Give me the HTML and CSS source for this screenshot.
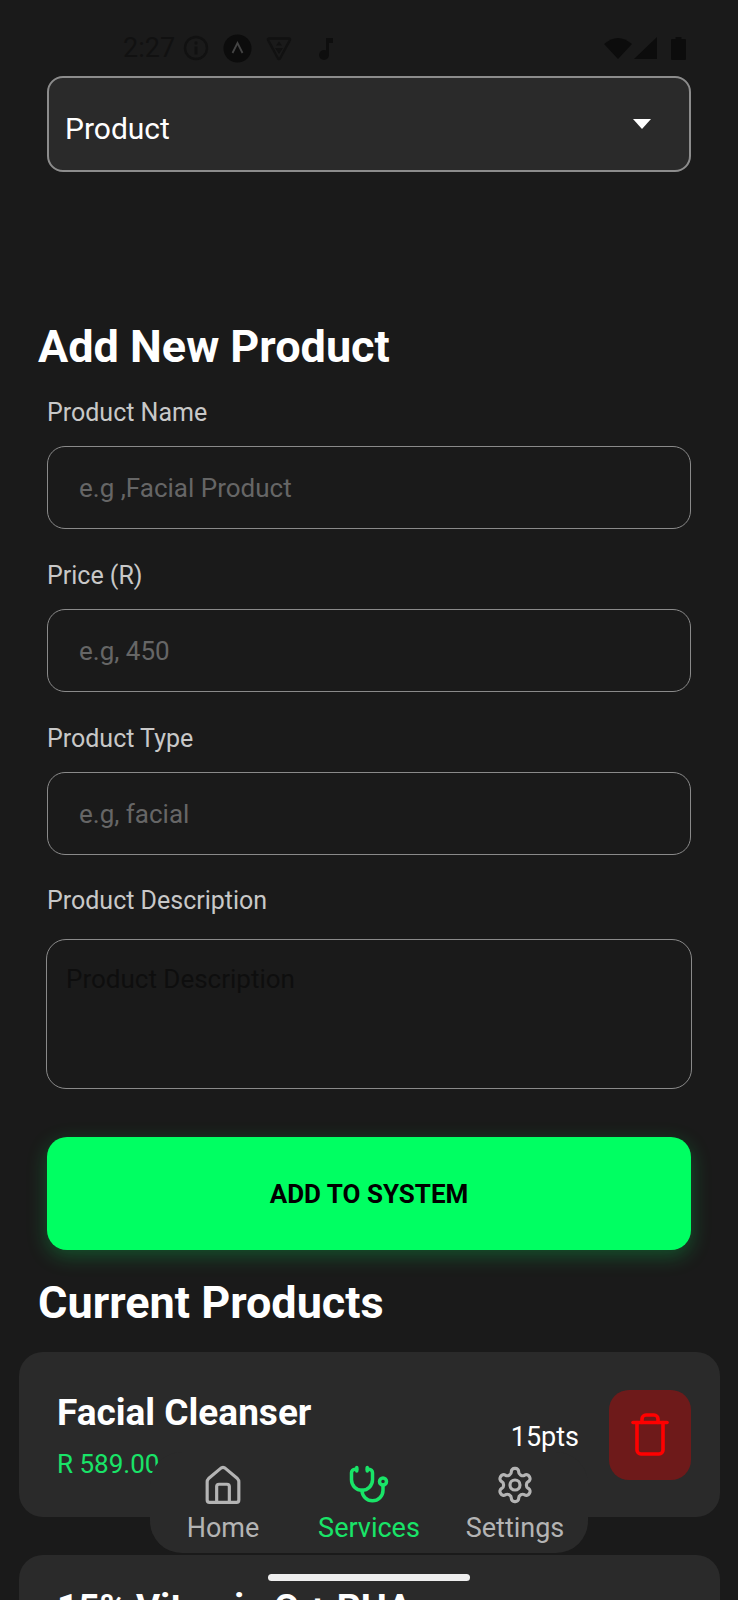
FILE: index.html
```html
<!DOCTYPE html>
<html lang="en">
<head>
    <meta charset="UTF-8">
    <meta name="viewport" content="width=device-width, initial-scale=1.0">
    <title>Add New Product</title>
    <link rel="stylesheet" href="styles.css">
</head>
<body>
    <div class="status-bar">
        <div class="status-left">
            <span class="status-time">2:27</span>
            <svg class="status-icon" width="26" height="26" viewBox="0 0 26 26"><circle cx="13" cy="13" r="11" fill="none" stroke="#111" stroke-width="2.4"/><circle cx="13" cy="8" r="1.7" fill="#111"/><rect x="11.6" y="11.5" width="2.8" height="8" fill="#111"/></svg>
            <svg class="status-icon icon-aura" width="29" height="29" viewBox="0 0 29 29"><circle cx="14.5" cy="14.5" r="14" fill="#0c0c0c"/><path d="M9.5 19 L14.5 9 L19.5 19" fill="none" stroke="#444" stroke-width="1.8"/></svg>
            <svg class="status-icon icon-shield" width="26" height="26" viewBox="0 0 26 26"><path d="M3 3.5 H23 a1 1 0 0 1 1 1.4 L14 23.5 a1.2 1.2 0 0 1 -2 0 L2 4.9 a1 1 0 0 1 1 -1.4z" fill="none" stroke="#111" stroke-width="2.4"/><path d="M9 13 H17 L13 19z" fill="#111"/><path d="M10 10.5 L13 6.5 L16 10.5z" fill="#111"/></svg>
            <svg class="status-icon icon-note" width="16" height="25" viewBox="0 0 16 25"><circle cx="6" cy="19" r="5" fill="#0e0e0e"/><path d="M8 19 V2 H15 V7 H11 V19z" fill="#0e0e0e"/></svg>
        </div>
        <div class="status-right">
            <svg width="28" height="22" viewBox="0 0 28 22"><path d="M0 7 Q14 -5 28 7 L14 22z" fill="#0c0c0c"/></svg>
            <svg width="23" height="22" viewBox="0 0 23 22"><path d="M23 0 V22 H0z" fill="#0c0c0c"/></svg>
            <svg class="icon-battery" width="15" height="23" viewBox="0 0 15 23"><path d="M4.5 0 H10.5 V2 H14 a1 1 0 0 1 1 1 V22 a1 1 0 0 1 -1 1 H1 a1 1 0 0 1 -1 -1 V3 a1 1 0 0 1 1 -1 H4.5z" fill="#0c0c0c"/></svg>
        </div>
    </div>

    <div class="page">
        <div class="picker">
            <span class="picker-value">Product</span>
            <span class="picker-arrow"></span>
        </div>

        <h1 class="add-title">Add New Product</h1>
        <div class="form">
            <div class="field">
                <div class="field-label">Product Name</div>
                <div class="field-input">e.g ,Facial Product</div>
            </div>
            <div class="field">
                <div class="field-label">Price (R)</div>
                <div class="field-input">e.g, 450</div>
            </div>
            <div class="field">
                <div class="field-label">Product Type</div>
                <div class="field-input">e.g, facial</div>
            </div>
            <div class="field-label label-description">Product Description</div>
            <div class="field-textarea">Product Description</div>
            <div class="add-button">ADD TO SYSTEM</div>
        </div>

        <h1 class="current-title">Current Products</h1>
        <div class="product-card">
            <div class="product-info">
                <div class="product-name">Facial Cleanser</div>
                <div class="product-price">R 589.00</div>
            </div>
            <div class="product-points">15pts</div>
            <div class="delete-button">
                <svg width="38" height="43" viewBox="0 0 38 43" fill="none" stroke="#f00" stroke-width="3.6" stroke-linecap="round" stroke-linejoin="round"><path d="M2 9.5 H36"/><path d="M11 9.5 V6 a4 4 0 0 1 4 -4 H23 a4 4 0 0 1 4 4 V9.5"/><path d="M6 9.5 V37 a4 4 0 0 0 4 4 H28 a4 4 0 0 0 4 -4 V9.5"/></svg>
            </div>
        </div>
        <div class="product-card card-next">
            <div class="product-info">
                <div class="product-name">15% Vitamin C + PHA</div>
            </div>
        </div>
    </div>

    <div class="bottom-nav">
        <div class="nav-item">
            <svg width="38" height="38" viewBox="0 0 24 24" fill="none" stroke="currentColor" stroke-width="2" stroke-linecap="round" stroke-linejoin="round"><path d="M3.5 23h17a1.5 1.5 0 0 0 1.5-1.5V10a3 3 0 0 0-.9-2.1L13.5 1.5a2 2 0 0 0-3 0L2.9 7.9A3 3 0 0 0 2 10v11.5A1.5 1.5 0 0 0 3.5 23z"/><path d="M8 23V13a1.5 1.5 0 0 1 1.5-1.5h5A1.5 1.5 0 0 1 16 13v10"/></svg>
            <span>Home</span>
        </div>
        <div class="nav-item nav-active">
            <svg width="42" height="38" viewBox="0 0 24 22" fill="none" stroke="currentColor" stroke-width="2" stroke-linecap="round" stroke-linejoin="round"><path d="M11 1v2"/><path d="M5 1v2"/><path d="M5 2H4a2 2 0 0 0-2 2v4a6 6 0 0 0 12 0V4a2 2 0 0 0-2-2h-1"/><path d="M8 14a6 6 0 0 0 12 0v-3"/><circle cx="20" cy="9" r="2"/></svg>
            <span>Services</span>
        </div>
        <div class="nav-item">
            <svg width="42" height="42" viewBox="0 0 24 24" fill="none" stroke="currentColor" stroke-width="1.9" stroke-linecap="round" stroke-linejoin="round"><path d="M12.22 2h-.44a2 2 0 0 0-2 2v.18a2 2 0 0 1-1 1.73l-.43.25a2 2 0 0 1-2 0l-.15-.08a2 2 0 0 0-2.73.73l-.22.38a2 2 0 0 0 .73 2.73l.15.1a2 2 0 0 1 1 1.72v.51a2 2 0 0 1-1 1.74l-.15.09a2 2 0 0 0-.73 2.73l.22.38a2 2 0 0 0 2.73.73l.15-.08a2 2 0 0 1 2 0l.43.25a2 2 0 0 1 1 1.73V20a2 2 0 0 0 2 2h.44a2 2 0 0 0 2-2v-.18a2 2 0 0 1 1-1.73l.43-.25a2 2 0 0 1 2 0l.15.08a2 2 0 0 0 2.73-.73l.22-.39a2 2 0 0 0-.73-2.73l-.15-.08a2 2 0 0 1-1-1.74v-.5a2 2 0 0 1 1-1.74l.15-.09a2 2 0 0 0 .73-2.73l-.22-.38a2 2 0 0 0-2.73-.73l-.15.08a2 2 0 0 1-2 0l-.43-.25a2 2 0 0 1-1-1.73V4a2 2 0 0 0-2-2z"/><circle cx="12" cy="12" r="3"/></svg>
            <span>Settings</span>
        </div>
    </div>
    <div class="home-indicator"></div>
</body>
</html>
```

FILE: styles.css
```css
html, body {
    margin: 0;
    height: 1600px;
    overflow: hidden;
}
body {
    position: relative;
    font-family: Roboto, sans-serif;
    background-color: #1a1a1a;
    color: #fff;
}

/* phone status bar, drawn dark on dark in the app */
.status-bar {
    position: absolute;
    top: 34px;
    left: 123px;
    right: 52px;
    height: 28px;
    display: flex;
    justify-content: space-between;
    align-items: center;
}
.status-left, .status-right {
    display: flex;
    align-items: center;
}
.status-time {
    font-size: 27px;
    color: #111;
    width: 60px;
}
.icon-aura { margin-left: 14px; }
.icon-shield { margin-left: 14px; }
.icon-note { margin-left: 26px; }
.status-right svg { margin-left: 2px; }
.status-right .icon-battery { margin-left: 14px; }

.page {
    padding-top: 76px;
}
.picker {
    height: 96px;
    margin: 0 47px;
    padding: 0 38px 0 16px;
    box-sizing: border-box;
    display: flex;
    justify-content: space-between;
    align-items: center;
    background: #2a2a2a;
    border: 2px solid #8c8c8c;
    border-radius: 16px;
}
.picker-value {
    font-size: 30px;
    padding-top: 8px;
}
.picker-arrow {
    width: 0;
    height: 0;
    border-left: 9px solid transparent;
    border-right: 9px solid transparent;
    border-top: 10px solid #fff;
}

h1 {
    margin: 0;
    font-size: 45px;
    font-weight: 700;
    line-height: 52px;
}
.add-title {
    margin: 149px 0 25px 38px;
}
.form {
    margin: 0 47px;
}
.field {
    margin-bottom: 32px;
}
.field-label {
    font-size: 25px;
    line-height: 30px;
    color: #c8c8c8;
    margin-bottom: 18px;
}
.field-input {
    height: 83px;
    box-sizing: border-box;
    padding-left: 31px;
    display: flex;
    align-items: center;
    font-size: 26px;
    color: #666;
    border: 1px solid #8a8a8a;
    border-radius: 18px;
}
.label-description {
    margin-top: -1px;
    margin-bottom: 23px;
}
.field-textarea {
    height: 150px;
    margin: 0 -1px;
    box-sizing: border-box;
    padding: 24px 19px;
    font-size: 26px;
    line-height: 30px;
    color: #0e0e0e;
    border: 1px solid #8a8a8a;
    border-radius: 20px;
}
.add-button {
    height: 113px;
    margin-top: 48px;
    display: flex;
    justify-content: center;
    align-items: center;
    font-size: 26px;
    font-weight: 700;
    color: #000;
    background: #00ff62;
    border-radius: 20px;
    box-shadow: 0 6px 20px rgba(0, 255, 98, 0.25);
}
.current-title {
    margin: 27px 0 23px 38px;
}

.product-card {
    height: 165px;
    margin: 0 18px 38px 19px;
    padding: 0 29px 0 38px;
    box-sizing: border-box;
    display: flex;
    align-items: center;
    background: #2a2a2a;
    border-radius: 24px;
}
.product-info {
    flex: 1;
}
.product-name {
    font-size: 37px;
    font-weight: 700;
    line-height: 44px;
    margin-bottom: 14px;
}
.product-price {
    font-size: 26px;
    line-height: 30px;
    color: #19e468;
}
.product-points {
    font-size: 27px;
    margin: 5px 30px 0 0;
}
.delete-button {
    width: 82px;
    height: 90px;
    display: flex;
    justify-content: center;
    align-items: center;
    background: #6e1a1a;
    border-radius: 20px;
}
.card-next {
    align-items: flex-start;
    padding-top: 31px;
}

.bottom-nav {
    position: absolute;
    left: 150px;
    top: 1452px;
    width: 438px;
    height: 101px;
    display: grid;
    grid-template-columns: repeat(3, 1fr);
    background: #2a2a2a;
    border-radius: 32px;
}
.nav-item {
    display: flex;
    flex-direction: column;
    align-items: center;
    padding-top: 13px;
    height: 88px;
    font-size: 27px;
    color: #b4b4b4;
    position: relative;
}
.nav-item svg {
    height: 40px;
    flex: none;
}
.nav-item span {
    position: absolute;
    top: 60px;
    line-height: 32px;
}
.nav-active {
    color: #19e468;
}
.home-indicator {
    position: absolute;
    left: 268px;
    top: 1574px;
    width: 202px;
    height: 7px;
    background: #eee;
    border-radius: 4px;
}
```
